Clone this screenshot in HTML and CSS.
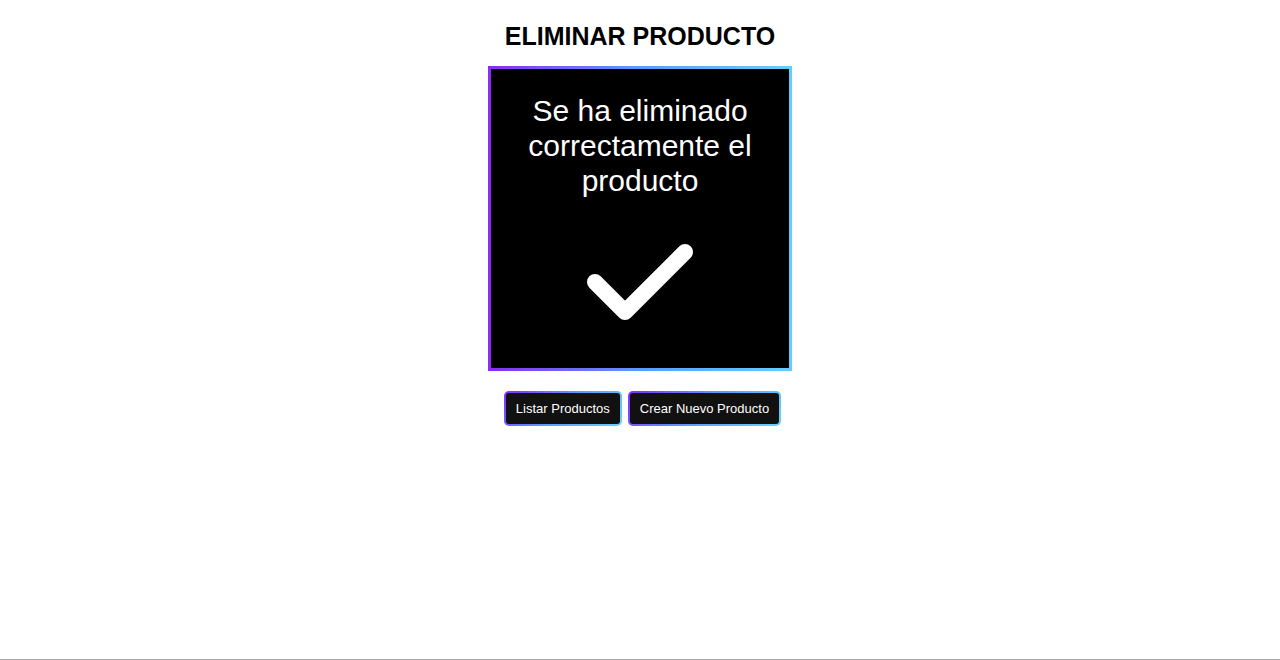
FILE: index.html
```html
<!DOCTYPE html>
<html lang="es">
<head>
<meta charset="utf-8">
<title>Eliminar producto</title>
<link rel="stylesheet" href="styles.css">
</head>
<body>
<main class="page">
  <h1 class="title">ELIMINAR PRODUCTO</h1>
  <section class="card">
    <p class="message">Se ha eliminado correctamente el producto</p>
    <svg class="check" viewBox="0 0 106 76" aria-hidden="true">
      <path d="M8 38 L38 68 L98 8" fill="none" stroke="#fff" stroke-width="16" stroke-linecap="round" stroke-linejoin="round"/>
    </svg>
  </section>
  <nav class="actions">
    <button class="button" type="button">Listar Productos</button>
    <button class="button" type="button">Crear Nuevo Producto</button>
  </nav>
</main>
</body>
</html>
```
FILE: styles.css
```css
* {
  box-sizing: border-box;
}

body {
  margin: 0;
  background: #fff;
  color: #000;
  font-family: Arial, "Liberation Sans", sans-serif;
}

.page {
  display: flex;
  flex-direction: column;
  align-items: center;
  min-height: 100vh;
  padding-top: 22px;
  border-bottom: 1px solid #a6a6a6;
}

.title {
  margin: 0 0 16px;
  font-size: 25px;
  line-height: 28px;
}

.card {
  display: flex;
  flex-direction: column;
  align-items: center;
  gap: 46px;
  width: 100%;
  max-width: 304px;
  padding: 24px 30px 48px;
  border: 3px solid;
  border-image: linear-gradient(90deg, #8a2cf5, #5a9cfb 50%, #66cdfb) 1;
  background: #000;
}

.message {
  margin: 0;
  color: #fff;
  font-size: 30px;
  line-height: 35px;
  text-align: center;
}

.check {
  display: block;
  width: 106px;
}

.actions {
  display: flex;
  flex-wrap: wrap;
  gap: 6px;
  margin-top: 20px;
  padding-left: 5px;
}

.button {
  padding: 8px 10px;
  border: 2px solid transparent;
  border-radius: 5px;
  background:
    linear-gradient(#111, #111) padding-box,
    linear-gradient(135deg, #8a2cff, #5a9cff 50%, #66d4ff) border-box;
  color: #fff;
  font-family: inherit;
  font-size: 13px;
  line-height: 15px;
  cursor: pointer;
}
```
